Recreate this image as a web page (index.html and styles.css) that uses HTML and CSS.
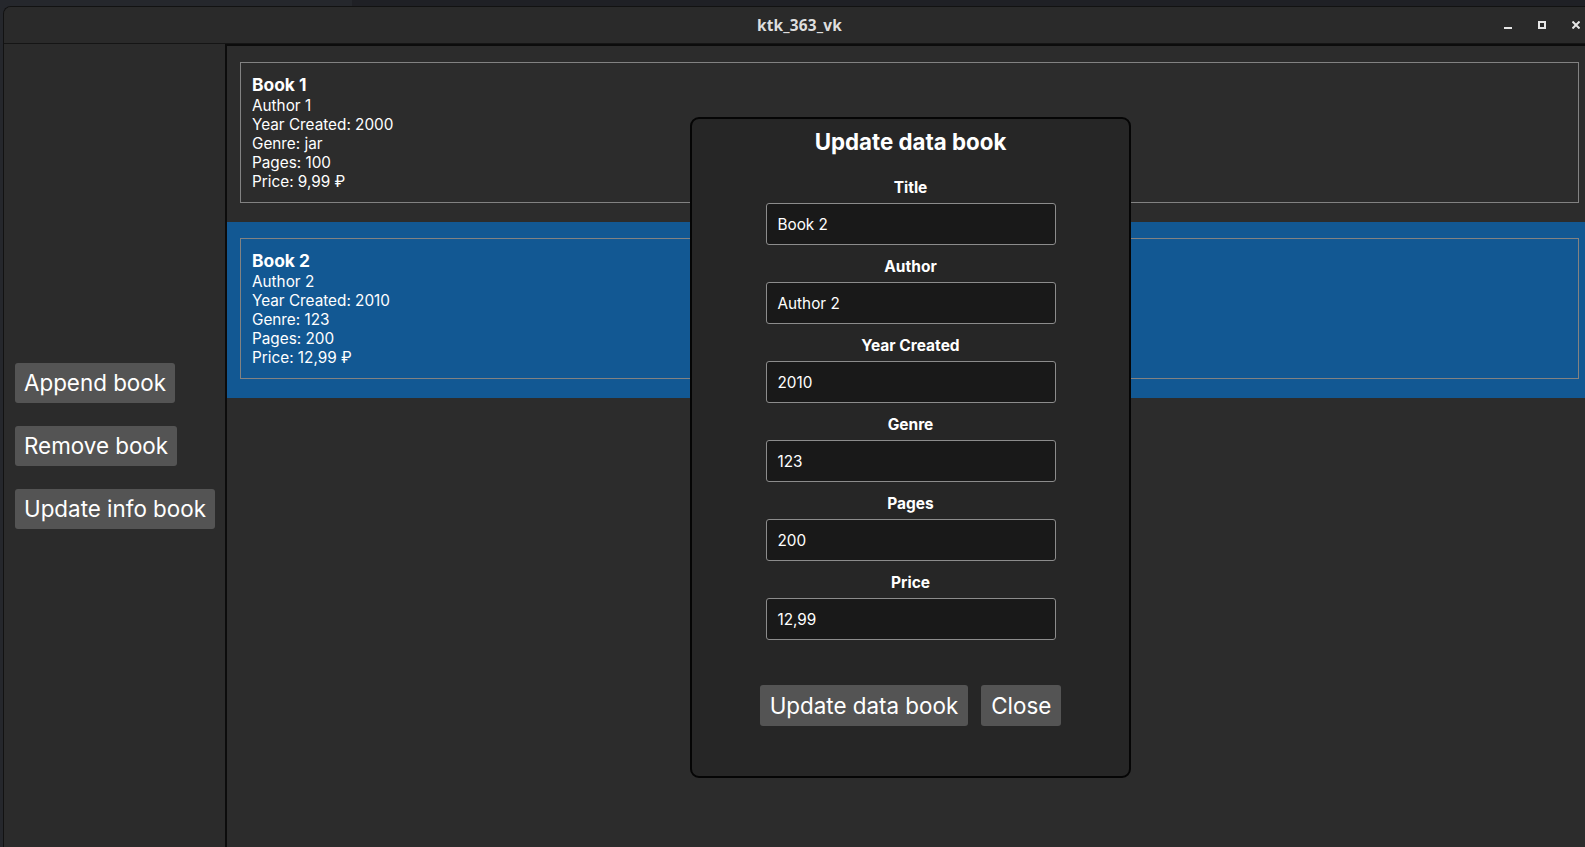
FILE: index.html
```html
<!DOCTYPE html>
<html lang="en">
<head>
<meta charset="utf-8">
<title>ktk_363_vk</title>
<link rel="stylesheet" href="styles.css">
</head>
<body>
<div class="desktop">
  <div class="window">
    <header class="titlebar">
      <div class="title">ktk_363_vk</div>
      <div class="controls">
        <svg class="ctl" width="8" height="8" viewBox="0 0 8 8"><rect x="0" y="6" width="8" height="2" fill="#e6e6e6"/></svg>
        <svg class="ctl" width="8" height="8" viewBox="0 0 8 8"><rect x="1" y="1" width="6" height="6" fill="none" stroke="#e6e6e6" stroke-width="2"/></svg>
        <svg class="ctl" width="8" height="8" viewBox="0 0 8 8"><path d="M0.5 0.5 L7.5 7.5 M7.5 0.5 L0.5 7.5" stroke="#e6e6e6" stroke-width="2"/></svg>
      </div>
    </header>
    <div class="content">
      <aside class="sidebar">
        <button class="btn">Append book</button>
        <button class="btn">Remove book</button>
        <button class="btn">Update info book</button>
      </aside>
      <main class="list">
        <div class="item">
          <div class="card">
            <div class="card-title">Book 1</div>
            <div class="line">Author 1</div>
            <div class="line">Year Created: 2000</div>
            <div class="line">Genre: jar</div>
            <div class="line">Pages: 100</div>
            <div class="line">Price: 9,99 ₽</div>
          </div>
        </div>
        <div class="item selected">
          <div class="card">
            <div class="card-title">Book 2</div>
            <div class="line">Author 2</div>
            <div class="line">Year Created: 2010</div>
            <div class="line">Genre: 123</div>
            <div class="line">Pages: 200</div>
            <div class="line">Price: 12,99 ₽</div>
          </div>
        </div>
      </main>
    </div>
    <section class="dialog">
      <h1 class="dlg-title">Update data book</h1>
      <label class="field-label">Title</label>
      <div class="input">Book 2</div>
      <label class="field-label">Author</label>
      <div class="input">Author 2</div>
      <label class="field-label">Year Created</label>
      <div class="input">2010</div>
      <label class="field-label">Genre</label>
      <div class="input">123</div>
      <label class="field-label">Pages</label>
      <div class="input">200</div>
      <label class="field-label">Price</label>
      <div class="input">12,99</div>
      <div class="dlg-actions">
        <button class="btn btn-dlg">Update data book</button>
        <button class="btn btn-dlg">Close</button>
      </div>
    </section>
  </div>
</div>
</body>
</html>
```

FILE: styles.css
```css
* { box-sizing: border-box; }
html, body {
  margin: 0;
  padding: 0;
  width: 1585px;
  height: 847px;
  overflow: hidden;
  background: #1f2025;
}
.desktop {
  width: 1585px;
  height: 847px;
  padding: 6px 0 0 3px;
  background: linear-gradient(to right, #25272c 0, #25272c 352px, #1f2025 352px);
}
.window {
  position: relative;
  height: 841px;
  width: 1582px;
  display: flex;
  flex-direction: column;
  background: #2b2b2b;
  border-top: 1px solid #121212;
  border-left: 1px solid #121212;
  border-top-left-radius: 8px;
  overflow: hidden;
  font-family: Inter, "Noto Sans", sans-serif;
  color: #ffffff;
}
.titlebar {
  height: 37px;
  flex: none;
  display: flex;
  align-items: center;
  background: #2a2a2a;
  border-bottom: 1px solid #151515;
  position: relative;
}
.title {
  flex: 1;
  text-align: center;
  padding-left: 10px;
  font-family: "Noto Sans", sans-serif;
  font-weight: 700;
  font-size: 15.4px;
  color: #dedede;
  letter-spacing: 0.2px;
}
.controls {
  position: absolute;
  right: 5px;
  top: 14px;
  display: flex;
  gap: 26px;
}
.ctl { display: block; }
.content {
  flex: 1;
  display: flex;
  min-height: 0;
}
.sidebar {
  width: 221px;
  flex: none;
  display: flex;
  flex-direction: column;
  justify-content: center;
  align-items: flex-start;
  gap: 23px;
  padding: 0 0 0 11px;
  background: #2b2b2b;
}
.btn {
  height: 40px;
  padding: 0 9px;
  border: 0;
  border-radius: 3px;
  background: #545454;
  color: #ffffff;
  font-family: Inter, sans-serif;
  font-size: 22.4px;
  line-height: 40px;
  white-space: nowrap;
}
.list {
  flex: 1;
  background: #2c2c2c;
  border-left: 2px solid #0c0c0c;
  border-top: 2px solid #0c0c0c;
}
.item {
  padding: 16px 6px 19px 13px;
}
.item.selected {
  background: #125893;
}
.card {
  border: 1px solid #828282;
  padding: 11px 11px 10px;
  height: 141px;
}
.card-title {
  font-weight: 700;
  font-size: 17.4px;
  line-height: 22px;
}
.line {
  font-size: 15.3px;
  line-height: 19px;
}
.dialog {
  position: absolute;
  left: 686px;
  top: 110px;
  width: 441px;
  height: 661px;
  background: #262626;
  border: 2px solid #050505;
  border-radius: 9px;
  display: flex;
  flex-direction: column;
  align-items: center;
  padding-top: 9px;
}
.dlg-title {
  margin: 0 0 22px;
  font-size: 22.3px;
  line-height: 28px;
  font-weight: 700;
}
.field-label {
  display: block;
  font-size: 15.5px;
  line-height: 20px;
  font-weight: 700;
  margin-bottom: 5px;
}
.input + .field-label { margin-top: 12px; }
.input {
  width: 290px;
  height: 42px;
  background: #191919;
  border: 1px solid #8c8c8c;
  border-radius: 3px;
  padding: 0 11px;
  display: flex;
  align-items: center;
  font-size: 15.3px;
}
.dlg-actions {
  margin-top: 45px;
  display: flex;
  gap: 13px;
}
.btn-dlg {
  height: 41px;
  line-height: 41px;
  padding: 0 10px;
}
```
